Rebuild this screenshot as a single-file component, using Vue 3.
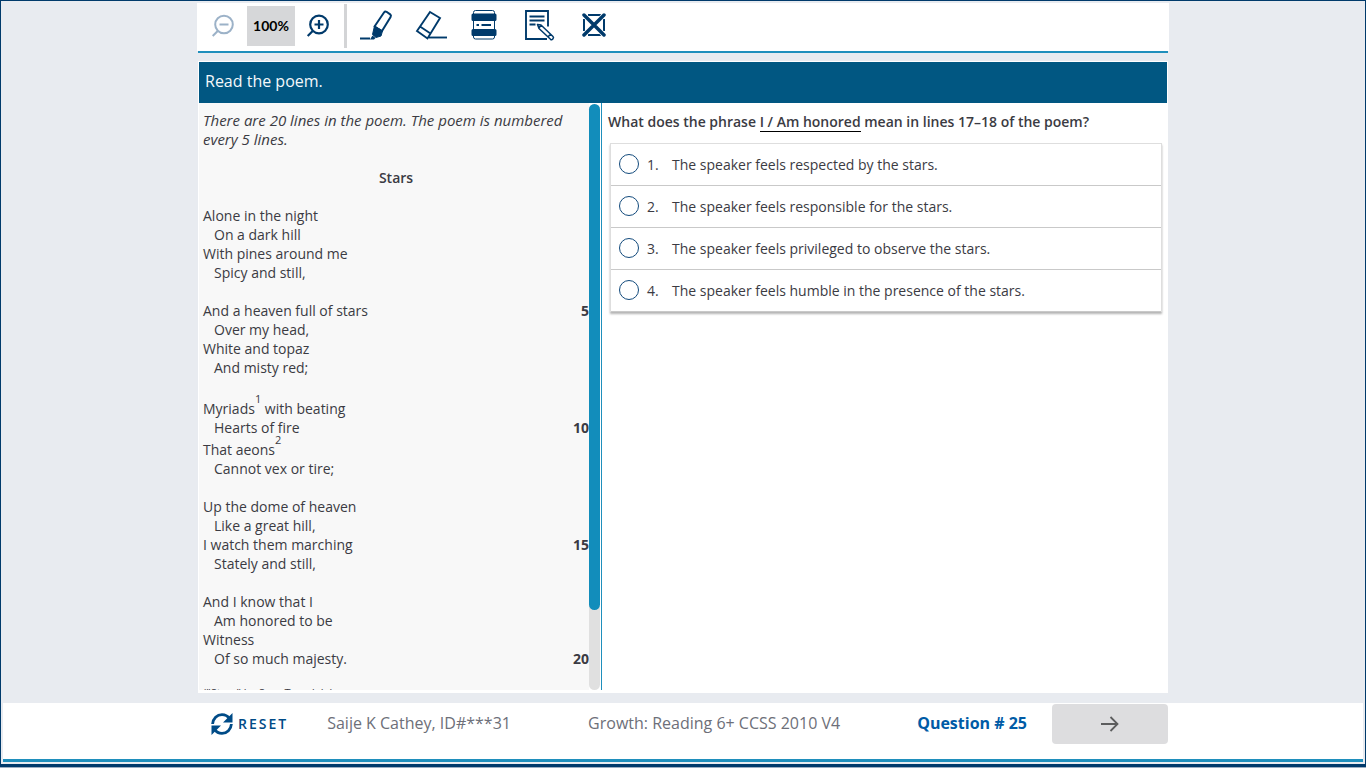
<script setup>
import { ref } from 'vue'

const stanzas = [
  [
    { text: 'Alone in the night' },
    { text: 'On a dark hill', indent: true },
    { text: 'With pines around me' },
    { text: 'Spicy and still,', indent: true }
  ],
  [
    { text: 'And a heaven full of stars', number: 5 },
    { text: 'Over my head,', indent: true },
    { text: 'White and topaz' },
    { text: 'And misty red;', indent: true }
  ],
  [
    { text: 'Myriads', note: '1', rest: ' with beating' },
    { text: 'Hearts of fire', indent: true, number: 10 },
    { text: 'That aeons', note: '2' },
    { text: 'Cannot vex or tire;', indent: true }
  ],
  [
    { text: 'Up the dome of heaven' },
    { text: 'Like a great hill,', indent: true },
    { text: 'I watch them marching', number: 15 },
    { text: 'Stately and still,', indent: true }
  ],
  [
    { text: 'And I know that I' },
    { text: 'Am honored to be', indent: true },
    { text: 'Witness' },
    { text: 'Of so much majesty.', indent: true, number: 20 }
  ]
]

const choices = [
  'The speaker feels respected by the stars.',
  'The speaker feels responsible for the stars.',
  'The speaker feels privileged to observe the stars.',
  'The speaker feels humble in the presence of the stars.'
]
const answer = ref(null)
</script>

<template>
  <div class="frame">
    <header class="column top">
      <div class="toolbar">
        <button class="tool zoom-out" aria-label="Zoom out" disabled>
          <svg width="24" height="24" viewBox="0 0 24 24" fill="none" stroke="currentColor" stroke-width="2">
            <circle cx="13" cy="11.500" r="8.800" /><path d="M8.500 11.500h9M6.700 18l-5 5" />
          </svg>
        </button>
        <output class="zoom-level">100%</output>
        <button class="tool zoom-in" aria-label="Zoom in">
          <svg width="24" height="24" viewBox="0 0 24 24" fill="none" stroke="currentColor" stroke-width="2.200">
            <circle cx="13" cy="11.500" r="8.800" /><path d="M8.500 11.500h9M13 7v9M6.700 18l-5 5" />
          </svg>
        </button>
        <span class="separator"></span>
        <button class="tool marker" aria-label="Highlighter">
          <svg width="34" height="32" viewBox="0 0 34 32" fill="none" stroke="currentColor">
            <path d="M14.500 17.500 24 3.500q1-1.500 2.500-.7l3.700 2.600q1.300 1 .4 2.500L22 22z" stroke-width="2" stroke-linejoin="round" />
            <path d="m14.500 17 8 5-1.500 5-5 1.500-3.500-3z" fill="currentColor" />
            <path d="m12.500 26.500 3 2.500-1.500 1.500h-4z" fill="currentColor" stroke="none" />
            <path d="M0 29.500h10" stroke-width="2" />
          </svg>
        </button>
        <button class="tool eraser" aria-label="Eraser">
          <svg width="34" height="32" viewBox="0 0 34 32" fill="none" stroke="currentColor" stroke-width="1.900">
            <path d="M15 3 25 9 12.500 29.500 2 22zM5 17.500l10.500 7" />
            <path d="M14 28.500h18" />
          </svg>
        </button>
        <button class="tool reader" aria-label="Line reader">
          <svg width="28" height="32" viewBox="0 0 28 32" fill="none" stroke="currentColor">
            <rect x="3.500" y="1.500" width="21" height="28.500" rx="2" stroke-width="1" />
            <path d="M3 4.500h22q1.500 0 1.500 1.500v4.500q0 1.500-1.500 1.500H3q-1.500 0-1.500-1.500V6q0-1.500 1.500-1.500zM3 20h22q1.500 0 1.500 1.500v4q0 1.500-1.500 1.500H3q-1.500 0-1.500-1.500v-4Q1.500 20 3 20z" fill="currentColor" stroke="none" />
            <path d="M6.500 16h2.500M11.500 16h9.500" stroke-width="2" />
          </svg>
        </button>
        <button class="tool notes" aria-label="Notepad">
          <svg width="32" height="32" viewBox="0 0 32 32" fill="none" stroke="currentColor" stroke-width="1.900">
            <path d="M24 17.500V2H2v28h21M5.500 7.500h15M5.500 11.500h15M5.500 15.500h6" />
            <path d="m13.500 15.500 3.500.5 12 11.500q1 1 0 2.200-1.200 1.600-2.500.6L15 19.500zM17 16l-2 3M26.500 25l-2.500 3" stroke-width="1.500" stroke-linejoin="round" />
          </svg>
        </button>
        <button class="tool eliminate" aria-label="Answer eliminator">
          <svg width="24" height="24" viewBox="0 0 24 24" fill="none" stroke="currentColor">
            <path d="M6 2h12l1 2M6 22h12l1-2M2 6v12M22 6v12" stroke-width="2" />
            <path d="m2 2 20 20M22 2 2 22" stroke="#fff" stroke-width="5" />
            <path d="m2 2 20 20M22 2 2 22" stroke-width="3.500" stroke-linecap="round" />
          </svg>
        </button>
      </div>
    </header>

    <main class="column sheet">
      <h1>Read the poem.</h1>
      <div class="panes">
        <section class="passage">
          <div class="poem">
            <p class="intro">There are 20 lines in the poem. The poem is numbered every 5 lines.</p>
            <h2>Stars</h2>
            <div v-for="(stanza, s) in stanzas" :key="s" class="stanza">
              <div v-for="line in stanza" :key="line.text" class="line" :class="{ indent: line.indent, noted: line.note }">
                <span>{{ line.text }}<sup v-if="line.note">{{ line.note }}</sup>{{ line.rest }}</span>
                <b v-if="line.number">{{ line.number }}</b>
              </div>
            </div>
            <p class="source">("Stars" by Sara Teasdale)</p>
          </div>
          <div class="track"><div class="thumb"></div></div>
        </section>
        <section class="question">
          <h3 id="prompt">What does the phrase <span class="phrase">I / Am honored</span> mean in lines 17–18 of the poem?</h3>
          <div class="choices" role="radiogroup" aria-labelledby="prompt">
            <label v-for="(choice, i) in choices" :key="i" class="choice">
              <input v-model="answer" type="radio" name="answer" :value="i">
              <span class="number">{{ i + 1 }}.</span>
              <span>{{ choice }}</span>
            </label>
          </div>
        </section>
      </div>
    </main>

    <footer class="bottom">
      <div class="column status">
        <button class="reset">
          <svg width="24" height="24" viewBox="0 0 24 24" fill="none" stroke="currentColor" stroke-width="2.800">
            <path d="M2.600 12C3 6.500 7 2.600 12 2.600c3.200 0 5.800 1.500 7.500 4M21.400 12c-.4 5.500-4.400 9.400-9.400 9.400-3.200 0-5.800-1.500-7.500-4" />
            <path d="M22.500 1v9.500H13zM1.500 23v-9.500H11z" fill="currentColor" stroke="none" />
          </svg>
          <span>RESET</span>
        </button>
        <span class="student">Saije K Cathey, ID#***31</span>
        <span class="test">Growth: Reading 6+ CCSS 2010 V4</span>
        <strong>Question # 25</strong>
        <button class="next" aria-label="Next question">
          <svg width="20" height="18" viewBox="0 0 20 18" fill="none" stroke="currentColor" stroke-width="1.800">
            <path d="M1 9h17M10.500 2l7 7-7 7" />
          </svg>
        </button>
      </div>
    </footer>
  </div>
</template>

<style>
html { background: #9caec2; }
body { margin: 0; }
</style>

<style scoped>
* { box-sizing: border-box; }
h1, h2, h3, p { margin: 0; }
button { padding: 0; border: 0; background: none; font: inherit; color: #003a6b; cursor: pointer; }
svg { display: block; }
.frame {
  display: flex;
  flex-direction: column;
  height: calc(100vh - 1px);
  min-height: 400px;
  padding: 2px;
  border: 1px solid #003a6b;
  border-bottom-width: 3px;
  background: #e8ebf0;
  color: #3b3b43;
  font: 14px/19px "Open Sans", sans-serif;
}
.column { width: 100%; max-width: 970px; margin: 0 auto; }
.top { border-bottom: 2px solid #1f8fbc; }
.toolbar {
  display: flex;
  align-items: center;
  height: 48px;
  margin: 0 -1px;
  padding: 0 14px 3px;
  background: #fff;
}
.tool { padding-bottom: 2px; }
.zoom-out { color: #9cb2c8; }
.zoom-level {
  width: 48px;
  margin: 0 11px 0 12px;
  background: #d6d7d9;
  color: #000;
  font: bold 14px/40px Lato, sans-serif;
  text-align: center;
}
.separator { width: 3px; height: 44px; margin: 0 13px 0 14px; background: #d3d4d6; }
.eraser { margin-left: 21px; }
.reader { margin-left: 21px; }
.notes { margin-left: 26px; }
.eliminate { margin-left: 26px; }

.sheet {
  display: flex;
  flex: 1;
  flex-direction: column;
  min-height: 0;
  margin-top: 8px;
  margin-bottom: 10px;
  padding: 1px 1px 3px;
  background: #fff;
}
h1 {
  padding: 0 6px 2px;
  background: #015782;
  color: #f4f8fa;
  font-size: 16px;
  font-weight: 400;
  line-height: 39px;
}
.panes { display: flex; flex: 1; min-height: 0; }
.passage {
  display: flex;
  flex: 0 0 403px;
  border-right: 1px solid #1f8fbc;
}
.poem { flex: 1; overflow: hidden; padding: 8px 0 0 4px; background: #f8f8f8; }
.intro { padding-right: 20px; font-size: 15px; font-style: italic; }
h2 { margin: 19px 0; font-size: 14px; font-weight: 600; text-align: center; }
.stanza { margin-bottom: 19px; }
.stanza:last-of-type { margin-bottom: 15px; }
.line { display: flex; justify-content: space-between; }
.indent { padding-left: 11px; }
.noted { padding-top: 3px; }
sup { font-size: 11px; line-height: 0; vertical-align: 11px; }
.source { font-size: 11px; }
.track { width: 11px; margin: 1px 1px 0 0; border-radius: 6px; background: #e0e0e0; }
.thumb { height: 86.4%; border-radius: 6px; background: #128dbb; }

.question { flex: 1; padding: 9px 5px 0 6px; }
h3 { margin-bottom: 12px; font-size: 14px; font-weight: 600; }
.phrase { border-bottom: 1px solid #000; }
.choices {
  margin: 0 0 0 2px;
  border: 1px solid #dedede;
  border-bottom: 0;
  box-shadow: 0 2px 2px #b4b4b4;
}
.choice {
  display: flex;
  align-items: center;
  height: 42px;
  padding: 0 8px;
  border-bottom: 1px solid #c9c9c9;
  cursor: pointer;
}
input {
  appearance: none;
  width: 20px;
  height: 20px;
  margin: 0 8px 2px 0;
  border: 1px solid #124a7c;
  border-radius: 50%;
  background: #fff;
}
input:checked { background: #124a7c; box-shadow: inset 0 0 0 4px #fff; }
.number { width: 25px; }

.bottom { height: 59px; border-bottom: 3px solid #1f8fbc; background: #fff; }
.status {
  display: flex;
  align-items: center;
  padding-top: 1px;
  color: #6d6f79;
  font-size: 16px;
}
.status span, strong { padding-bottom: 2px; }
.reset {
  display: flex;
  gap: 4px;
  align-items: center;
  margin-left: 12px;
  color: #004b87;
  font-size: 14px;
  font-weight: 600;
  letter-spacing: 2px;
}
.student { margin-left: 39px; }
.test { margin-left: auto; }
strong { margin: 0 25px 0 77px; color: #005ba6; font-weight: 700; }
.next {
  display: grid;
  place-items: center;
  width: 116px;
  height: 40px;
  border-radius: 4px;
  background: #dddddf;
  color: #5c5d5e;
}
</style>
